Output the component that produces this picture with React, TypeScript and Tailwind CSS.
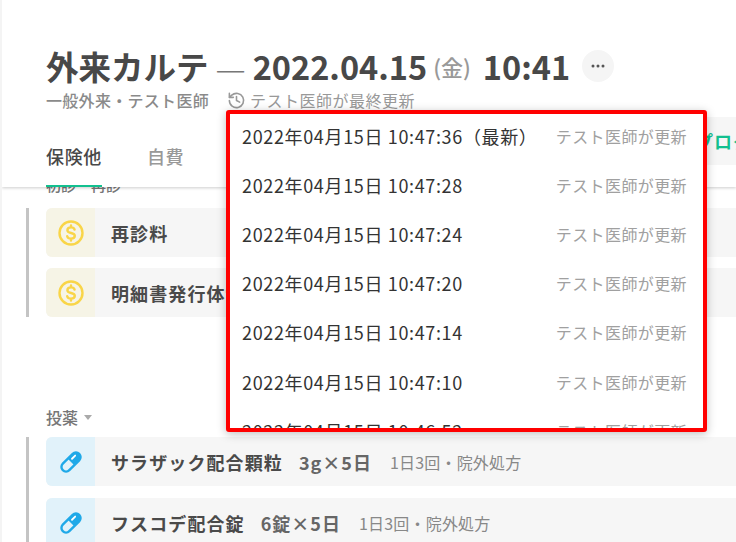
import React from "react";

const font = { fontFamily: '"Noto Sans CJK JP", "Noto Sans", sans-serif' };

function Coin() {
  return (
    <svg width="26" height="26" viewBox="0 0 26 26" fill="none" stroke="#f9d548" strokeWidth="2.400" strokeLinecap="round" strokeLinejoin="round">
      <circle cx="13" cy="13" r="11.500" />
      <path d="M16.600 9.600c-.4-1.400-1.800-2.200-3.600-2.200-2 0-3.600 1-3.600 2.800 0 3.800 7.400 1.800 7.400 5.600 0 1.800-1.700 2.800-3.800 2.800-1.900 0-3.400-.9-3.800-2.400M13 5.400v2M13 18.600v2" />
    </svg>
  );
}

function Pill() {
  return (
    <svg width="24" height="24" viewBox="0 0 24 24" fill="none">
      <g transform="translate(12 12) rotate(-45)">
        <path d="M0 -4.600H7a4.600 4.600 0 0 1 0 9.200H0Z" fill="#1fa9e8" />
        <rect x="-11.600" y="-4.600" width="23.200" height="9.200" rx="4.600" stroke="#1fa9e8" strokeWidth="2.400" />
        <path d="M3 -1.600H7.500" stroke="#ffffff" strokeWidth="1.800" strokeLinecap="round" />
      </g>
    </svg>
  );
}

function Row({ icon, tint, name, dose, note }: { icon: React.ReactNode; tint: string; name: string; dose?: string; note?: string }) {
  return (
    <div className="flex h-[49px] items-center rounded-l-md bg-[#f6f6f6]">
      <div className={`flex h-full w-[49px] shrink-0 items-center justify-center rounded-l-md ${tint}`}>{icon}</div>
      <div className="ml-4 text-lg font-bold tracking-[1.1px] whitespace-nowrap text-[#4a4a4a]">{name}</div>
      {dose && <div className="ml-[16px] text-lg font-bold tracking-[1px] whitespace-nowrap text-[#666]">{dose}</div>}
      {note && <div className="ml-[18px] text-base tracking-[0.2px] whitespace-nowrap text-[#888]">{note}</div>}
    </div>
  );
}

const times = [
  "2022年04月15日 10:47:36（最新）",
  "2022年04月15日 10:47:28",
  "2022年04月15日 10:47:24",
  "2022年04月15日 10:47:20",
  "2022年04月15日 10:47:14",
  "2022年04月15日 10:47:10",
  "2022年04月15日 10:46:52",
];

export default function App() {
  return (
    <div style={font} className="relative h-[542px] w-[736px] overflow-hidden border-l-2 border-[#f4f4f4] bg-white">
      <header className="relative z-10 h-[187px] bg-white pt-[43px] pl-11 shadow-[0_1px_3px_rgba(0,0,0,0.2)]">
        <div className="flex h-[46px] items-center whitespace-nowrap text-[#484848]">
          <span className="text-[32.500px] font-bold">外来カルテ</span>
          <span className="mx-[7px] text-[34px] font-extralight text-[#777]">—</span>
          <span className="text-[32.500px] font-bold">2022.04.15</span>
          <span className="ml-1.5 text-[22px] font-medium text-[#999]">(金)</span>
          <span className="ml-3 text-[32.500px] font-bold">10:41</span>
          <span className="ml-3 flex h-8 w-8 items-center justify-center rounded-full bg-[#f5f5f5] text-sm font-bold leading-none">
            <svg width="14" height="4" viewBox="0 0 14 4" fill="#555"><circle cx="2" cy="2" r="1.500" /><circle cx="7" cy="2" r="1.500" /><circle cx="12" cy="2" r="1.500" /></svg>
          </span>
        </div>
        <div className="flex h-[22px] items-center whitespace-nowrap text-base tracking-[0.3px] text-[#8a8a8a]">
          <span className="font-medium">一般外来・テスト医師</span>
          <svg className="mr-1 ml-[18px]" width="19" height="19" viewBox="0 0 24 24" fill="none" stroke="#999" strokeWidth="2" strokeLinecap="round" strokeLinejoin="round">
            <path d="M3 12a9 9 0 1 0 3-6.700L3 8" /><path d="M3 3v5h5" /><path d="M12 7v5l4 2" />
          </svg>
          <span className="tracking-[0.5px] text-[#999]">テスト医師が最終更新</span>
        </div>
        <nav className="mt-[21px] flex h-[55px] text-lg font-medium tracking-[0.6px]">
          <div className="relative flex w-[56px] items-center justify-center pb-[7px] text-[#484848]">
            保険他
            <span className="absolute right-0 bottom-0 left-0 h-[2px] bg-[#12c08f]" />
          </div>
          <div className="ml-[45px] flex items-center pb-[7px] text-[#999]">自費</div>
        </nav>
      </header>

      <main className="relative pl-11">
        <div className="-mt-[12px] h-[33px] text-[15px] leading-[20px] font-medium text-[#777]">初診・再診</div>
        <div className="relative flex flex-col gap-[11px]">
          <span className="absolute top-0 bottom-0 -left-[20px] w-[3px] bg-[#c4c4c4]" />
          <Row icon={<Coin />} tint="bg-[#f6f4e6]" name="再診料" />
          <Row icon={<Coin />} tint="bg-[#f6f4e6]" name="明細書発行体制等加算" />
        </div>
        <div className="mt-[90px] flex h-[20px] items-center gap-1.5 text-base font-medium text-[#777]">
          投薬
          <span className="h-0 w-0 border-x-[4px] border-t-[5px] border-x-transparent border-t-[#aaa]" />
        </div>
        <div className="relative mt-[10px] flex flex-col gap-[12px]">
          <span className="absolute top-0 bottom-0 -left-[20px] w-[3px] bg-[#c4c4c4]" />
          <Row icon={<Pill />} tint="bg-[#e1f2fa]" name="サラザック配合顆粒" dose="3g×5日" note="1日3回・院外処方" />
          <Row icon={<Pill />} tint="bg-[#e1f2fa]" name="フスコデ配合錠" dose="6錠×5日" note="1日3回・院外処方" />
        </div>
      </main>

      <div className="absolute top-[117px] left-[690px] z-20 flex h-[48px] w-[60px] items-center bg-[#f6f6f6] pl-[3px] text-lg font-bold tracking-[1.100px] whitespace-nowrap text-[#12c08f]">
        プログラム
      </div>

      <div className="absolute top-[110px] left-[224px] z-30 h-[322px] w-[481px] overflow-hidden rounded-[3px] border-4 border-[#ff0000] bg-white shadow-[0_2px_10px_rgba(0,0,0,0.25)]">
        <div className="-mt-[3px] flex flex-col">
          {times.map((t) => (
            <div key={t} className="flex h-[49.200px] shrink-0 items-center justify-between pr-[16px] pl-3">
              <span className="text-lg tracking-[0.650px] whitespace-nowrap text-[#333]">{t}</span>
              <span className="text-base tracking-[0.4px] whitespace-nowrap text-[#a0a0a0]">テスト医師が更新</span>
            </div>
          ))}
        </div>
      </div>
    </div>
  );
}
